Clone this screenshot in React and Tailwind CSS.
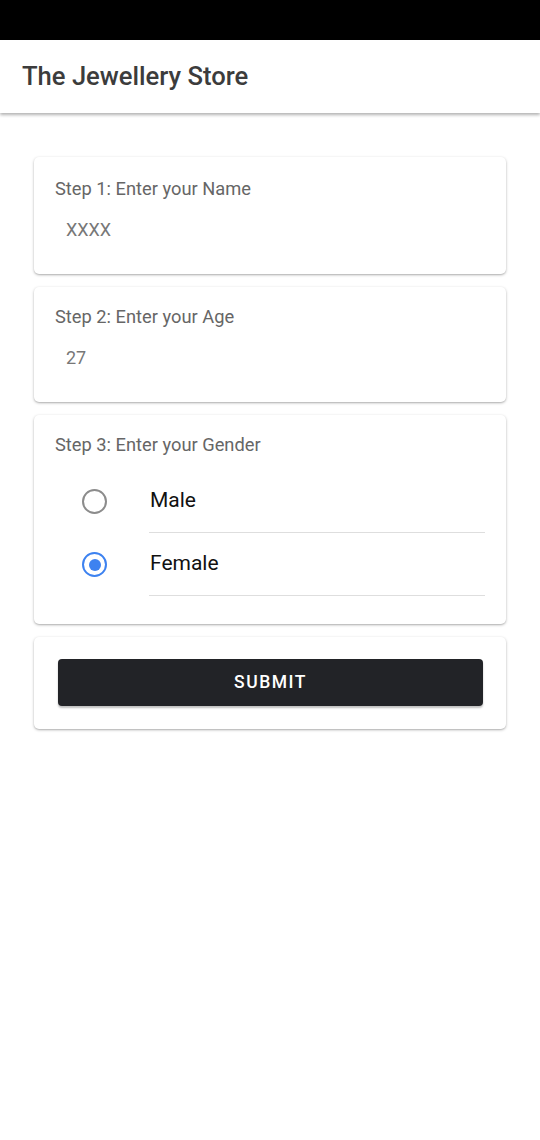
import React from "react";

function Radio({ checked }) {
  return checked ? (
    <div className="w-[25px] h-[25px] rounded-full border-[2.5px] border-[#3d82f0] flex items-center justify-center">
      <div className="w-[12px] h-[12px] rounded-full bg-[#3d82f0]" />
    </div>
  ) : (
    <div className="w-[25px] h-[25px] rounded-full border-[2.5px] border-[#8c8c8c]" />
  );
}

function Card({ children, className = "" }) {
  return (
    <div className={`bg-white rounded-[5px] shadow-[0_1px_3px_rgba(0,0,0,0.28),0_1px_1px_rgba(0,0,0,0.08)] ${className}`}>
      {children}
    </div>
  );
}

export default function App() {
  return (
    <div className="w-[540px] h-[1140px] bg-white flex flex-col" style={{ fontFamily: "Roboto, 'Noto Sans', sans-serif" }}>
      <div className="h-[40px] bg-black shrink-0" />
      <div className="h-[73px] bg-white flex items-center px-[22px] shadow-[0_2px_3px_rgba(0,0,0,0.3)] relative z-10 shrink-0">
        <span className="text-[25.6px] font-medium text-[#3c3c3c]">The Jewellery Store</span>
      </div>
      <div className="flex flex-col gap-[13px] px-[34px] pt-[44px]">
        <Card className="h-[117px] px-[21px] pt-[20px]">
          <div className="text-[18.3px] leading-[24px] text-[#666666]">Step 1: Enter your Name</div>
          <div className="mt-[17px] pl-[11px] text-[18px] leading-[24px] text-[#777777]">XXXX</div>
        </Card>
        <Card className="h-[115px] px-[21px] pt-[18px]">
          <div className="text-[18.3px] leading-[24px] text-[#666666]">Step 2: Enter your Age</div>
          <div className="mt-[17px] pl-[11px] text-[18px] leading-[24px] text-[#777777]">27</div>
        </Card>
        <Card className="h-[209px] px-[21px] pt-[18px]">
          <div className="text-[18.3px] leading-[24px] text-[#666666]">Step 3: Enter your Gender</div>
          <div className="mt-[13px] flex flex-col">
            {[
              { label: "Male", checked: false },
              { label: "Female", checked: true },
            ].map((o) => (
              <div key={o.label} className="flex items-stretch h-[63px]">
                <div className="pl-[27px] w-[94px] flex items-center shrink-0">
                  <Radio checked={o.checked} />
                </div>
                <div className="flex-1 flex items-center border-b border-[#dedede] pl-px">
                  <span className="text-[21px] text-[#111111]">{o.label}</span>
                </div>
              </div>
            ))}
          </div>
        </Card>
        <Card className="h-[92px] pl-[24px] pr-[23px] pt-[22px]">
          <button className="w-full h-[47px] rounded-[4px] bg-[#222327] text-white text-[17.5px] font-medium tracking-[1.5px] shadow-[0_2px_2px_rgba(0,0,0,0.25)]">
            SUBMIT
          </button>
        </Card>
      </div>
    </div>
  );
}
